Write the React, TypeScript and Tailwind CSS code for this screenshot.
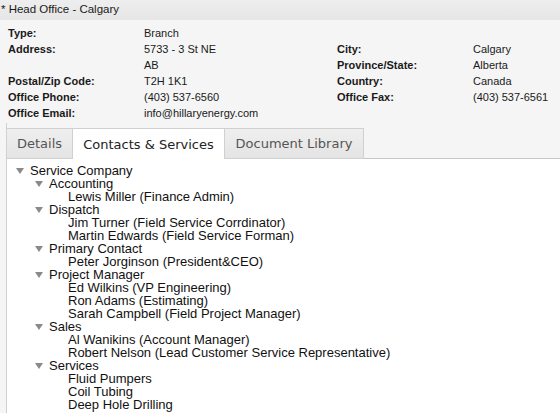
import React from "react";

type Node = { label: string; children?: Node[] };

const tree: Node[] = [
  {
    label: "Service Company",
    children: [
      { label: "Accounting", children: [{ label: "Lewis Miller (Finance Admin)" }] },
      {
        label: "Dispatch",
        children: [
          { label: "Jim Turner (Field Service Corrdinator)" },
          { label: "Martin Edwards (Field Service Forman)" },
        ],
      },
      { label: "Primary Contact", children: [{ label: "Peter Jorginson (President&CEO)" }] },
      {
        label: "Project Manager",
        children: [
          { label: "Ed Wilkins (VP Engineering)" },
          { label: "Ron Adams (Estimating)" },
          { label: "Sarah Campbell (Field Project Manager)" },
        ],
      },
      {
        label: "Sales",
        children: [
          { label: "Al Wanikins (Account Manager)" },
          { label: "Robert Nelson (Lead Customer Service Representative)" },
        ],
      },
      {
        label: "Services",
        children: [
          { label: "Fluid Pumpers" },
          { label: "Coil Tubing" },
          { label: "Deep Hole Drilling" },
        ],
      },
    ],
  },
];

const indentClass = ["pl-[9px]", "pl-[28px]", "pl-[47px]"];

function Triangle() {
  return (
    <span className="w-[14px] shrink-0 flex items-center">
      <svg width="8" height="6" viewBox="0 0 8 6">
        <polygon points="0,0 8,0 4,6" fill="#8a8a8a" />
      </svg>
    </span>
  );
}

function TreeRows({ nodes, level }: { nodes: Node[]; level: number }) {
  return (
    <>
      {nodes.map((n, i) => (
        <React.Fragment key={i}>
          <div className={`flex items-center h-[13px] leading-[13px] ${indentClass[level]}`}>
            {n.children ? <Triangle /> : <span className="w-[14px] shrink-0" />}
            <span className="whitespace-nowrap">{n.label}</span>
          </div>
          {n.children && <TreeRows nodes={n.children} level={level + 1} />}
        </React.Fragment>
      ))}
    </>
  );
}

function Label({ children }: { children?: React.ReactNode }) {
  return <div className="font-bold h-[16px] leading-[16px] whitespace-nowrap">{children}</div>;
}
function Value({ children }: { children?: React.ReactNode }) {
  return <div className="h-[16px] leading-[16px] whitespace-nowrap">{children}</div>;
}

export default function App() {
  return (
    <div className="w-[560px] h-[413px] overflow-hidden bg-[#f5f5f5] flex flex-col" style={{ fontFamily: '"Liberation Sans", Arial, sans-serif' }}>
      <div className="h-[20px] shrink-0 bg-gradient-to-b from-[#eeeeee] to-[#e6e6e6] pl-[1px] text-[11.5px] leading-[18px] text-[#1a1a1a] whitespace-nowrap">
        * Head Office - Calgary
      </div>
      <div className="shrink-0 pt-[5px] pl-[8px] h-[103px] grid grid-cols-[136px_193px_136px_1fr] text-[11px] text-[#1a1a1a] content-start">
        <Label>Type:</Label>
        <Value>Branch</Value>
        <Label></Label>
        <Value></Value>

        <Label>Address:</Label>
        <Value>5733 - 3 St NE</Value>
        <Label>City:</Label>
        <Value>Calgary</Value>

        <Label></Label>
        <Value>AB</Value>
        <Label>Province/State:</Label>
        <Value>Alberta</Value>

        <Label>Postal/Zip Code:</Label>
        <Value>T2H 1K1</Value>
        <Label>Country:</Label>
        <Value>Canada</Value>

        <Label>Office Phone:</Label>
        <Value>(403) 537-6560</Value>
        <Label>Office Fax:</Label>
        <Value>(403) 537-6561</Value>

        <Label>Office Email:</Label>
        <Value>info@hillaryenergy.com</Value>
        <Label></Label>
        <Value></Value>
      </div>
      <div className="flex-1 ml-[6px] border-l border-[#d0d0d0] flex flex-col min-h-0">
        <div className="flex h-[36px] shrink-0 items-end border-b border-[#c8c8c8] pt-[5px]" style={{ fontFamily: '"DejaVu Sans", Verdana, sans-serif' }}>
          <div className="h-[31px] -mb-px w-[66px] flex items-center justify-center pt-[1px] bg-gradient-to-b from-[#efefef] to-[#e4e4e4] border-t border-r border-b border-[#d0d0d0] text-[13px] text-[#555555]">
            Details
          </div>
          <div className="h-[31px] -mb-px w-[152px] flex items-center justify-center pt-[1px] bg-white border-t border-r border-[#d0d0d0] text-[13px] text-[#222222]">
            Contacts &amp; Services
          </div>
          <div className="h-[31px] -mb-px w-[139px] flex items-center justify-center pt-[1px] bg-gradient-to-b from-[#efefef] to-[#e4e4e4] border-t border-r border-b border-[#d0d0d0] text-[13px] text-[#555555]">
            Document Library
          </div>
        </div>
        <div className="flex-1 bg-white pt-[5px] text-[13px] text-[#111111]">
          <TreeRows nodes={tree} level={0} />
        </div>
      </div>
    </div>
  );
}
